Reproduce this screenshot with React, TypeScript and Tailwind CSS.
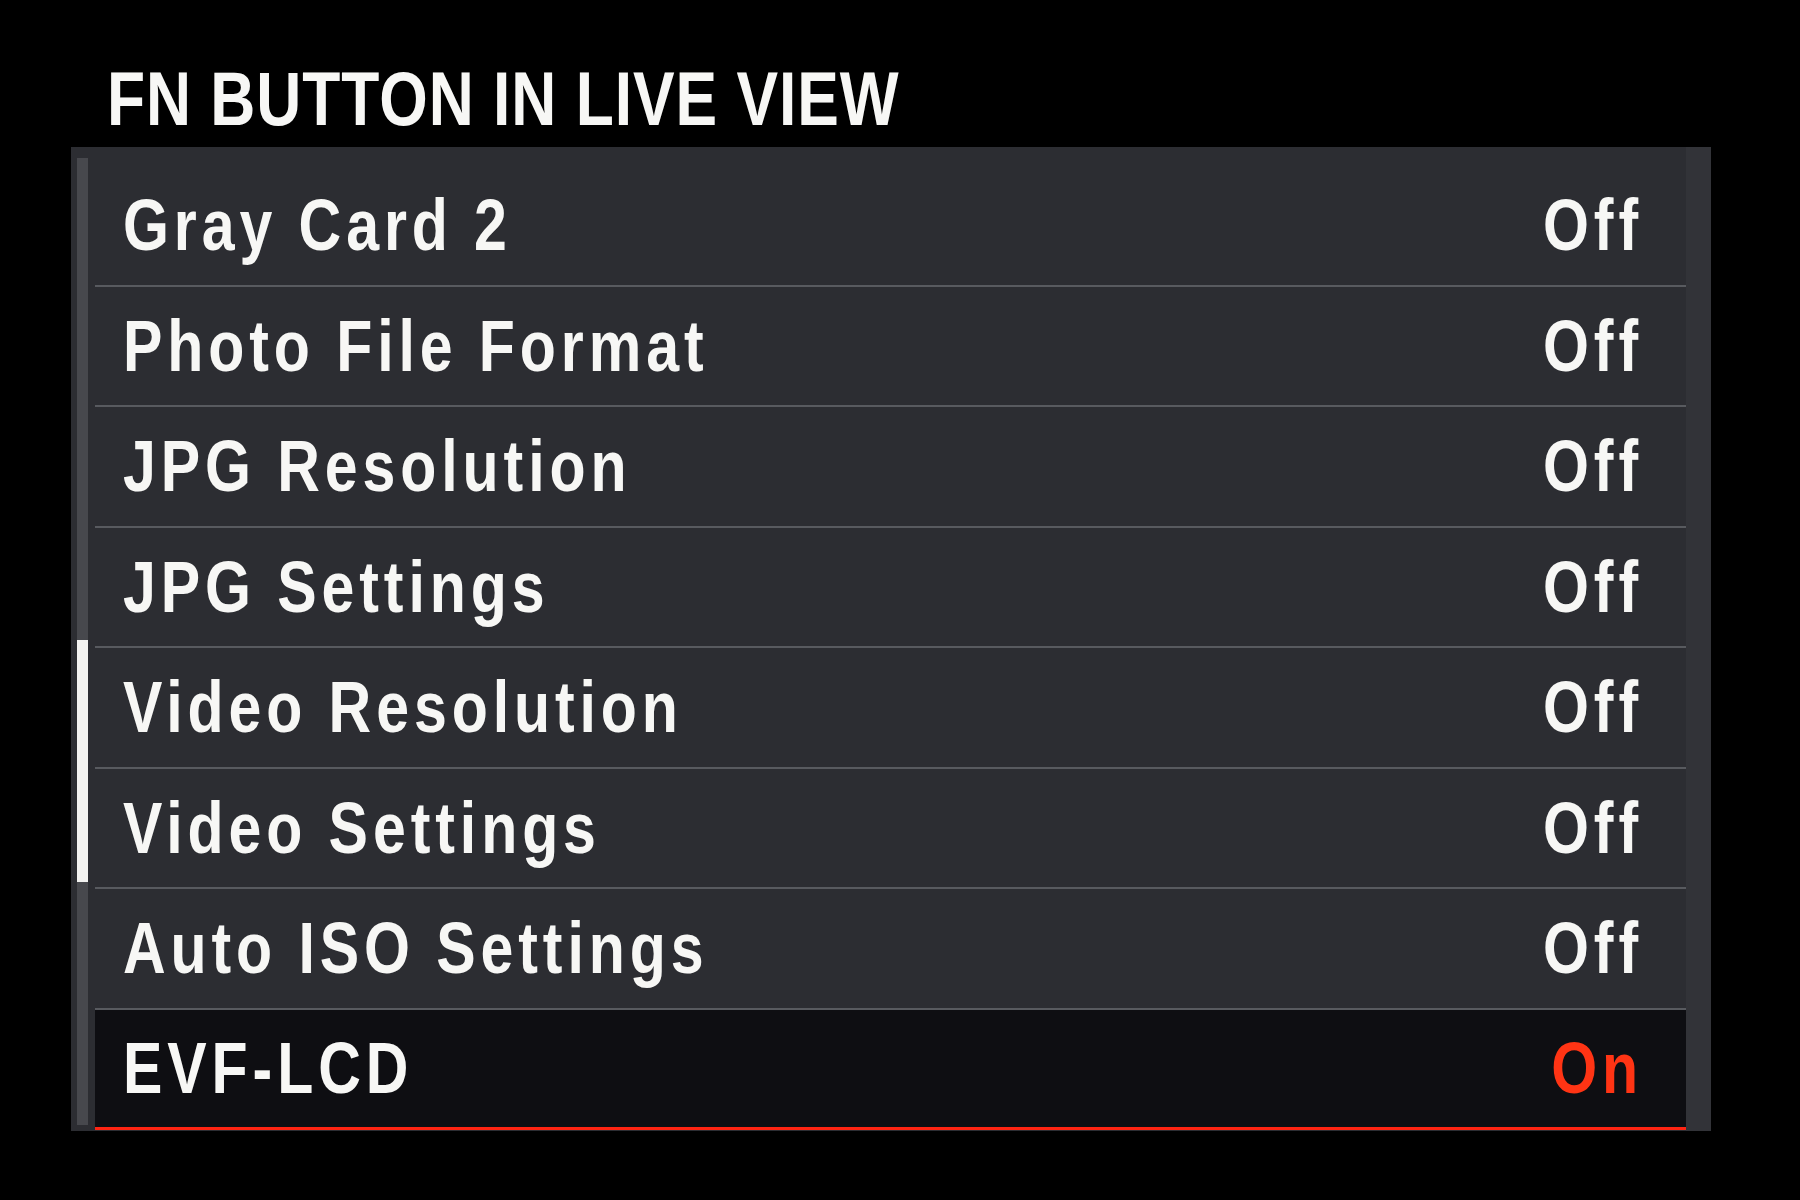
const rows = [
  { label: "Gray Card 2", value: "Off" },
  { label: "Photo File Format", value: "Off" },
  { label: "JPG Resolution", value: "Off" },
  { label: "JPG Settings", value: "Off" },
  { label: "Video Resolution", value: "Off" },
  { label: "Video Settings", value: "Off" },
  { label: "Auto ISO Settings", value: "Off" },
];

// narrow look: Liberation Sans squeezed horizontally, the way Liberation Sans Narrow is drawn
const font = { fontFamily: '"Liberation Sans", Arial, sans-serif' };

const labelCls =
  "inline-block origin-left scale-x-[0.82] text-[72px] leading-none font-bold tracking-[6px] whitespace-nowrap";
const valueCls =
  "inline-block origin-right scale-x-[0.82] text-[72px] leading-none font-bold tracking-[6px] whitespace-nowrap";

export default function App() {
  return (
    <div className="w-[1800px] h-[1200px] bg-black overflow-hidden" style={font}>
      {/* title */}
      <div className="pt-[61px] pl-[107px]">
        <h1 className="inline-block origin-left scale-x-[0.82] text-[76px] leading-none font-bold tracking-[1.2px] whitespace-nowrap text-[#f7f7f5]">
          FN BUTTON IN LIVE VIEW
        </h1>
      </div>

      {/* menu panel */}
      <div className="mt-[10px] ml-[71px] w-[1640px] h-[984px] flex bg-[#2c2d32]">
        {/* scroll bar */}
        <div className="w-[24px] shrink-0 pt-[11px] pl-[6px]">
          <div className="w-[11px] h-[967px] bg-[#47484d] flex flex-col">
            <div className="h-[482px] shrink-0" />
            <div className="w-[11px] h-[242px] bg-[#f2f2f0]" />
          </div>
        </div>

        {/* rows */}
        <div className="flex-1 pt-[19px]">
          {rows.map((row) => (
            <div
              key={row.label}
              className="h-[120.5px] flex items-center justify-between pl-[28px] pr-[43px] border-b-2 border-[#585a5f] text-[#f7f7f5]"
            >
              <span className={labelCls}>{row.label}</span>
              <span className={valueCls}>{row.value}</span>
            </div>
          ))}
          <div className="h-[120.5px] flex items-center justify-between pl-[28px] pr-[43px] bg-[#0e0e12] border-b-[3px] border-[#ff2412]">
            <span className={labelCls + " text-[#f7f7f5]"}>EVF-LCD</span>
            <span className={valueCls + " text-[#ff3414]"}>On</span>
          </div>
        </div>

        {/* right edge strip */}
        <div className="w-[25px] shrink-0 bg-[#323338]" />
      </div>
    </div>
  );
}
